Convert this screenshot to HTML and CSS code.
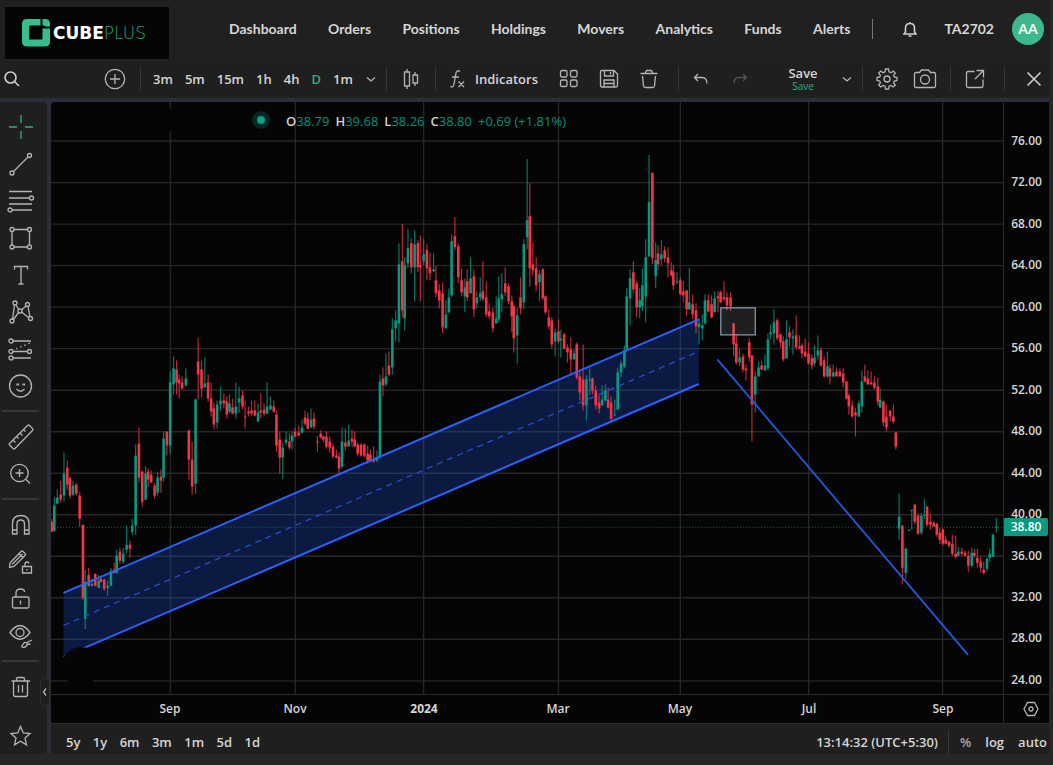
FILE: index.html
```html
<!DOCTYPE html>
<html lang="en">
<head>
<meta charset="utf-8">
<meta name="viewport" content="width=device-width, initial-scale=1">
<title>CubePlus Chart</title>
<link rel="stylesheet" href="styles.css">
</head>
<body>
<header class="topbar">
  <a class="logo" href="#" aria-label="CubePlus">
    <svg class="logo-mark" viewBox="0 0 28 28" aria-hidden="true"><path class="mark" d="M5 0H18.500V6.500H7V20.500H20.500V9.500H28V22.500Q28 27.500 23 27.500H5Q0 27.500 0 22.500V5Q0 0 5 0Z"/><path class="mark" d="M20.500 0H23Q28 0 28 5V7.500H24L20.500 6Z"/></svg>
    <span class="logo-cube">CUBE</span><span class="logo-plus">PLUS</span>
  </a>
  <nav class="nav">
    <a href="#">Dashboard</a><a href="#">Orders</a><a href="#">Positions</a><a href="#">Holdings</a><a href="#">Movers</a><a href="#">Analytics</a><a href="#">Funds</a><a href="#">Alerts</a>
  </nav>
  <div class="account">
    <span class="account-line"></span>
    <button class="icon-btn bell" aria-label="Notifications"><svg width="14" height="17" viewBox="0 0 14 17"><path class="bold" d="M1 13H13L11.500 11V7Q11.500 2.500 7 2.500Q2.500 2.500 2.500 7V11ZM7 2.500V1M5.500 15H8.500"/></svg></button>
    <span class="user">TA2702</span>
    <button class="avatar">AA</button>
  </div>
</header>

<div class="toolbar">
  <button class="icon-btn search" aria-label="Search"><svg width="18" height="18" viewBox="0 0 18 18"><circle class="bold" cx="7.500" cy="7.500" r="5.500"/><path class="bold" d="M11.500 11.500L16 16"/></svg></button>
  <button class="icon-btn add" aria-label="Compare symbol"><svg width="22" height="22" viewBox="0 0 22 22"><circle cx="11" cy="11" r="9.700"/><path d="M11 6V16M6 11H16"/></svg></button>
  <span class="sep"></span>
  <div class="intervals">
    <button>3m</button><button>5m</button><button>15m</button><button>1h</button><button>4h</button><button class="active">D</button><button>1m</button>
  </div>
  <button class="icon-btn chev" aria-label="More intervals"><svg width="12" height="12" viewBox="0 0 12 12"><path d="M2 4.500L6 8L10 4.500"/></svg></button>
  <span class="sep"></span>
  <button class="icon-btn tool-24" aria-label="Chart type"><svg width="18" height="22" viewBox="0 0 18 22"><path d="M5 1V4M5 18V21M2.500 4H7.500V18H2.500ZM13 4V7M13 15V18M11 7H15.500V15H11Z"/></svg></button>
  <span class="sep"></span>
  <button class="indicators"><svg width="18" height="20" viewBox="0 0 18 20"><path d="M11 2.500Q8 .500 7 4L5 15Q4.300 19 1 17.500M3 8H10M9.500 12.500L15 18M15 12.500L9.500 18"/></svg>Indicators</button>
  <div class="layout-tools">
    <button class="icon-btn" aria-label="Templates"><svg width="20" height="20" viewBox="0 0 20 20"><rect x="1.500" y="1.500" width="6.500" height="6.500" rx="1.500"/><rect x="11.500" y="1.500" width="6.500" height="6.500" rx="1.500"/><rect x="1.500" y="11" width="6.500" height="6.500" rx="1.500"/><rect x="11.500" y="11" width="6.500" height="6.500" rx="1.500"/></svg></button>
    <button class="icon-btn" aria-label="Save layout"><svg width="20" height="20" viewBox="0 0 20 20"><path d="M2.500 1.500H15L18.500 5V16.500Q18.500 18 17 18H3Q1.500 18 1.500 16.500V3Q1.500 1.500 2.500 1.500ZM5.500 1.500V7H14.500V1.500M5 18V11H15V18M11.500 3V5.500M5 14.500H15"/></svg></button>
    <button class="icon-btn" aria-label="Delete"><svg width="20" height="20" viewBox="0 0 20 20"><path d="M1.500 4.500H18.500M6 4.500L7.500 1.500H12.500L14 4.500M3.500 7L4.500 17Q4.700 18.500 6.500 18.500H13.500Q15.300 18.500 15.500 17L16.500 7"/></svg></button>
  </div>
  <span class="sep"></span>
  <div class="history">
    <button class="icon-btn" aria-label="Undo"><svg width="16" height="16" viewBox="0 0 16 16"><path d="M5 3L1.500 6.500L5 10M1.500 6.500H9Q14 6.500 14 12.500"/></svg></button>
    <button class="icon-btn faded" aria-label="Redo"><svg width="16" height="16" viewBox="0 0 16 16"><path d="M11 3L14.500 6.500L11 10M14.500 6.500H7Q2 6.500 2 12.500"/></svg></button>
  </div>
  <button class="save">Save<small>Save</small></button>
  <button class="icon-btn chev" aria-label="Saved layouts"><svg width="12" height="12" viewBox="0 0 12 12"><path d="M2 4.500L6 8L10 4.500"/></svg></button>
  <span class="sep"></span>
  <div class="settings">
    <button class="icon-btn" aria-label="Settings"><svg width="22" height="22" viewBox="0 0 22 22"><path d="M9.500 1H12.500L13 3.800L15 4.700L17.300 3L19.300 5L17.600 7.300L18.300 9L21 9.500V12.500L18.300 13L17.600 14.800L19.300 17L17.300 19L15 17.400L13 18.200L12.500 21H9.500L9 18.200L7 17.400L4.700 19L2.700 17L4.400 14.800L3.700 13L1 12.500V9.500L3.700 9L4.400 7.300L2.700 5L4.700 3L7 4.700L9 3.800Z"/><circle cx="11" cy="11" r="3"/></svg></button>
    <button class="icon-btn" aria-label="Screenshot"><svg width="24" height="22" viewBox="0 0 24 22"><path d="M3 4.500H6.500L8.500 2H15.500L17.500 4.500H21Q22.500 4.500 22.500 6V18Q22.500 19.500 21 19.500H3Q1.500 19.500 1.500 18V6Q1.500 4.500 3 4.500Z"/><circle cx="12" cy="11.500" r="4.500"/></svg></button>
  </div>
  <span class="sep"></span>
  <button class="icon-btn tool-24" aria-label="Open in new window"><svg width="20" height="20" viewBox="0 0 20 20"><path d="M9.500 2.500H3Q1.500 2.500 1.500 4V17Q1.500 18.500 3 18.500H16.500Q18 18.500 18 17V10.500M11.500 1.500H18.500V8.500M18.500 1.500L10 10"/></svg></button>
  <span class="sep last"></span>
  <button class="icon-btn close" aria-label="Close"><svg width="16" height="16" viewBox="0 0 16 16"><path class="bold" d="M1.500 1.500L14.500 14.500M14.500 1.500L1.500 14.500"/></svg></button>
</div>

<main class="workspace">
  <aside class="drawing">
    <button class="tool green" aria-label="Cross"><svg viewBox="0 0 28 28"><path d="M14 2V10M14 18V26M2 14H10M18 14H26"/></svg></button>
    <button class="tool" aria-label="Trend line"><svg viewBox="0 0 28 28"><path d="M6.500 21.500L21 7"/><circle cx="5" cy="23" r="2"/><circle cx="22.500" cy="5.500" r="2"/></svg></button>
    <button class="tool" aria-label="Fibonacci"><svg viewBox="0 0 28 28"><path d="M2 4.500H25M2 11H22.500M2 17H25M5 23H25"/><circle cx="24.500" cy="11" r="2"/><circle cx="3" cy="23" r="2"/></svg></button>
    <button class="tool" aria-label="Shapes"><svg viewBox="0 0 28 28"><path d="M7 5.500H20.500M7 23H20.500M5 7.500V21M22.500 7.500V21"/><circle cx="5" cy="5.500" r="2"/><circle cx="22.500" cy="5.500" r="2"/><circle cx="5" cy="23" r="2"/><circle cx="22.500" cy="23" r="2"/></svg></button>
    <button class="tool" aria-label="Text"><svg viewBox="0 0 28 28"><path d="M7.500 8.500V5.500H20.500V8.500M14 5.500V23M11.500 23H16.500"/></svg></button>
    <button class="tool" aria-label="Patterns"><svg viewBox="0 0 28 28"><path d="M5.500 21.500L7.500 7M6.500 21.500L11.500 14.500M9 7L12 12M14.500 12L19 8M21 8.500L23 19M14.500 14L21.500 19.500"/><circle cx="8" cy="5" r="2"/><circle cx="20.500" cy="6.500" r="2"/><circle cx="13" cy="13" r="2"/><circle cx="5" cy="23" r="2"/><circle cx="23.500" cy="20.500" r="2"/></svg></button>
    <button class="tool" aria-label="Forecast"><svg viewBox="0 0 28 28"><path d="M6 6H24M6 16.500H20.500M6 23H24"/><path stroke-dasharray="1.500 3" d="M9 14L23 8"/><circle cx="4" cy="6" r="2"/><circle cx="4" cy="16.500" r="2"/><circle cx="22.500" cy="16.500" r="2"/><circle cx="4" cy="23" r="2"/></svg></button>
    <button class="tool" aria-label="Emoji"><svg viewBox="0 0 28 28"><circle cx="13.500" cy="14" r="11"/><path d="M9.500 17Q13.500 21.500 17.500 17M10 11.500V13.500M11.500 11.500V13.500M16 11.500V13.500M17.500 11.500V13.500"/></svg></button>
    <hr>
    <button class="tool" aria-label="Measure"><svg viewBox="0 0 28 28"><path d="M2.500 20.500L20.500 2.500Q21.500 1.500 22.500 2.500L25.500 5.500Q26.500 6.500 25.500 7.500L8 25.500Q7 26.500 6 25.500L2.500 22Q1.800 21.300 2.500 20.500ZM6 17L8.500 19.500M9.500 13.500L11.500 15.500M13 10L15.500 12.500M16.500 6.500L18.500 8.500"/></svg></button>
    <button class="tool" aria-label="Zoom in"><svg viewBox="0 0 28 28"><circle cx="12.500" cy="13" r="8.700"/><path d="M19 19.500L23 23.500M12.500 9V17M8.500 13H16.500"/></svg></button>
    <hr>
    <button class="tool" aria-label="Magnet"><svg viewBox="0 0 28 28"><path d="M5.500 23V12.500Q5.500 4.500 13.800 4.500Q22 4.500 22 12.500V23H17.500V13Q17.500 9 13.800 9Q10 9 10 13V23ZM5.500 19H10M17.500 19H22"/></svg></button>
    <button class="tool" aria-label="Stay in drawing mode"><svg viewBox="0 0 28 28"><path d="M3 15L14 3.500Q15 2.500 16 3.500L18 5.500Q19 6.500 18 7.500L7 18.500L2.500 19.500ZM5 16.500L15.500 6M12 5.500L16 9.500M16 18.500H24.500V25H15.500V18.500ZM18 18.500V16Q18 14 20 14Q22 14 22 15.500M20 21V22.500"/></svg></button>
    <button class="tool" aria-label="Lock drawings"><svg viewBox="0 0 28 28"><rect x="5.500" y="12" width="16.500" height="11" rx="1.500"/><path d="M9 12V8Q9 4 13.500 4Q17.500 4 17.500 7M13.500 15.500V19.500"/></svg></button>
    <button class="tool" aria-label="Hide drawings"><svg viewBox="0 0 28 28"><path d="M3 10.500Q13 -3.500 23 10.500Q13 24 3 10.500Z"/><circle cx="13" cy="10.500" r="4"/><path d="M14.500 25Q17 19.500 19 20.500T19.500 24Q17.500 26 14.500 25M20 20.500L25 18M20.500 22.500L23.500 22"/></svg></button>
    <hr>
    <button class="tool" aria-label="Remove objects"><svg viewBox="0 0 28 28"><path d="M4.500 8H23M9.500 8V6Q9.500 4.500 11 4.500H16Q17.500 4.500 17.500 6V8M6.500 8V21.500Q6.500 23.500 8.500 23.500H18.500Q20.500 23.500 20.500 21.500V8M11.500 12V19.500M15.500 12V19.500"/></svg></button>
    <button class="tool star" aria-label="Favorites"><svg viewBox="0 0 28 28"><path d="M13.500 4.500L16.300 11L23 11.500L18 16L19.500 22.800L13.500 19.200L7.500 22.800L9 16L4 11.500L10.700 11Z"/></svg></button>
    <button class="collapse" aria-label="Hide drawings toolbar"><svg width="6" height="10" viewBox="0 0 6 10"><path d="M4 1.500L1.500 5L4 8.500"/></svg></button>
  </aside>

  <section class="chart">
    <div class="plot">
      <svg class="canvas" viewBox="51 102 953 591" preserveAspectRatio="none" role="img" aria-label="Daily candlestick chart">
        <g id="grid"></g>
        <path class="ink" d="M160 109H250V131H160Z"/>
        <path class="last-price" d="M51 526.500H1004"/>
        <path class="channel" d="M63.500 592L699.500 319V383.500L63.500 656Z"/>
        <g id="candles"></g>
        <path class="trend" d="M63.500 592L699.500 319M63.500 656L699.500 383.500"/>
        <path class="median" d="M63.500 624.500L699.500 351"/>
        <path class="ray" d="M718 359L969 654"/>
        <rect class="zone" x="721.500" y="307.500" width="34.500" height="27"/>
        <path class="ink" d="M62 658Q70 646 81 646Q94 646 99 657V670H93V684H68V670H62Z"/>
      </svg>
      <div class="legend">
        <span class="dot"></span>
        <span><b>O</b>38.79</span><span><b>H</b>39.68</span><span><b>L</b>38.26</span><span><b>C</b>38.80</span><span>+0.69 (+1.81%)</span>
      </div>
    </div>
    <div class="prices">
      <span>76.00</span><span>72.00</span><span>68.00</span><span>64.00</span><span>60.00</span><span>56.00</span><span>52.00</span><span>48.00</span><span>44.00</span><span>40.00</span><span>36.00</span><span>32.00</span><span>28.00</span><span>24.00</span>
      <strong class="price-tag">38.80</strong>
    </div>
    <div class="months">
      <span>Sep</span><span>Nov</span><span class="year">2024</span><span>Mar</span><span>May</span><span>Jul</span><span>Sep</span>
    </div>
    <button class="icon-btn axis-settings" aria-label="Axis settings"><svg width="16" height="16" viewBox="0 0 16 16"><path d="M4.500 1.500H11.500L15 8L11.500 14.500H4.500L1 8Z"/><circle cx="8" cy="8" r="2"/></svg></button>
    <footer class="ranges">
      <div class="range-list"><button>5y</button><button>1y</button><button>6m</button><button>3m</button><button>1m</button><button>5d</button><button>1d</button></div>
      <button class="clock">13:14:32 (UTC+5:30)</button>
      <span class="sep short"></span>
      <div class="scales"><button class="percent">%</button><button>log</button><button>auto</button></div>
    </footer>
  </section>
</main>
<script src="chart.js"></script>
</body>
</html>
```

FILE: styles.css
```css
* { box-sizing: border-box; }

body {
  margin: 0;
  min-height: 100vh;
  display: flex;
  flex-direction: column;
  padding: 0 4px 12px 0;
  background: #272727;
  color: #d6d6d6;
  font-family: "Open Sans", "Noto Sans", sans-serif;
  font-size: 13px;
  line-height: 20px;
}

button {
  padding: 0;
  border: 0;
  background: none;
  color: inherit;
  font: inherit;
  cursor: pointer;
}

a { color: inherit; text-decoration: none; }

svg {
  display: block;
  flex: none;
  fill: none;
  stroke: #b4b4b4;
  stroke-width: 1.3;
}

.bold { stroke: #cfcfcf; stroke-width: 1.6; }
.icon-btn { display: flex; align-items: center; justify-content: center; flex: none; }

/* Header */
.topbar {
  display: flex;
  align-items: center;
  height: 60px;
  padding-right: 5px;
  background: #202020;
  font-family: Lato, "Noto Sans", sans-serif;
  font-size: 14px;
  font-weight: 700;
}

.logo {
  display: flex;
  align-items: center;
  width: 164px;
  height: 52px;
  margin: 6px 0 0 5px;
  padding-left: 17px;
  background: #050505;
  font-family: "DejaVu Sans", sans-serif;
  font-size: 17px;
  line-height: 20px;
}

.logo-mark { width: 28px; height: 28px; margin-right: 3px; stroke: none; }
.mark { fill: #36bd91; }
.logo-cube { color: #fff; font-weight: 700; }
.logo-plus { color: #2aa57c; font-weight: 200; }

.nav {
  flex: 1;
  display: flex;
  justify-content: space-between;
  margin-left: 60px;
  padding-bottom: 2px;
}

.account { display: flex; align-items: center; padding-bottom: 2px; }
.account-line { width: 1px; height: 20px; margin: 0 30px 0 22px; background: #777; }
.user { margin: 0 18px 0 27px; }

.avatar {
  width: 32px;
  height: 32px;
  border-radius: 50%;
  background: #3cb98c;
  color: #fff;
}

/* Chart toolbar */
.toolbar {
  display: flex;
  align-items: center;
  height: 38px;
  padding-bottom: 1px;
  background: #1f1f1f;
  font-weight: 600;
}

.sep { width: 1px; height: 24px; flex: none; background: #34353d; }
.search { width: 24px; }
.add { width: 24px; margin: 0 13px 0 79px; }

.intervals {
  display: flex;
  justify-content: space-between;
  width: 200px;
  margin: 0 12px;
}

.active { color: #2fae83; }
.chev { width: 12px; margin-right: 9px; }
.tool-24 { width: 24px; margin: 0 12px; }
.indicators { display: flex; align-items: center; gap: 8px; width: 92px; margin-left: 13px; }
.layout-tools { display: flex; gap: 20px; margin: 0 19px 0 18px; }
.history { display: flex; gap: 23px; margin: 0 14px; }

.save {
  display: flex;
  flex-direction: column;
  align-items: center;
  width: 32px;
  margin: 0 22px 0 auto;
  line-height: 14px;
}

.save small { color: #2fae83; font-size: 10px; line-height: 12px; font-weight: 400; }
.faded { opacity: .35; }
.settings { display: flex; gap: 15px; margin: 0 13px; }
.last { margin-left: 5px; }
.close { width: 16px; margin: 0 7px 0 21px; }

/* Workspace */
.workspace {
  flex: 1;
  display: flex;
  gap: 4px;
  border-top: 4px solid #2a2e39;
  background: #2a2e39;
}

.drawing {
  position: relative;
  display: flex;
  flex-direction: column;
  width: 47px;
  flex: none;
  padding: 6px 0 0;
  background: #1f1f1f;
  border-radius: 0 4px 0 0;
}

.tool { height: 37px; padding-left: 7px; }
.tool svg { width: 28px; height: 28px; }
.green svg { stroke: #2fae83; }
.drawing hr { width: 37px; height: 2px; margin: 6px 0 6px 2px; border: 0; background: #34353d; }
.star { margin-top: 12px; }

.collapse {
  position: absolute;
  right: -3px;
  bottom: 48px;
  width: 10px;
  height: 28px;
  display: flex;
  align-items: center;
  justify-content: center;
  background: #1f1f1f;
  border: 1px solid #2a2e39;
  border-radius: 4px;
}

.chart {
  flex: 1;
  min-width: 0;
  display: grid;
  grid-template-columns: 1fr 46px;
  grid-template-rows: 1fr 29px 31px;
  background: #050505;
  border-radius: 4px 0 0 0;
}

.plot { position: relative; min-height: 300px; }

.canvas { position: absolute; inset: 0; width: 100%; height: 100%; }
.grid-line { stroke: #262626; stroke-width: 1.4; }
.ink { fill: #050505; stroke: none; }
.last-price { stroke: #0b6b5c; stroke-width: 1; stroke-dasharray: 1 2; }
.channel { fill: rgba(33, 86, 228, .27); stroke: none; }
.trend { stroke: #2962ff; stroke-width: 2; }
.median { stroke: #2350c8; stroke-width: 1.3; stroke-dasharray: 6 5; }
.ray { stroke: #2458e0; stroke-width: 1.8; }
.zone { fill: rgba(125, 135, 140, .2); stroke: #8ba0b8; stroke-width: 1.2; }
.wick { stroke-width: 1.2; opacity: .75; }
.body { stroke-width: 2.6; }
.up { stroke: #089981; }
.down { stroke: #f23645; }

.legend {
  position: absolute;
  top: 9px;
  left: 201px;
  display: flex;
  gap: 6px;
  color: #0c8f7a;
  white-space: nowrap;
}

.legend b { color: #d0d0d0; font-weight: 600; }

.dot {
  width: 18px;
  height: 18px;
  margin-right: 10px;
  border: 5px solid #06281f;
  border-radius: 50%;
  background: #0aa389;
}

.prices {
  position: relative;
  display: flex;
  flex-direction: column;
  justify-content: space-between;
  align-items: center;
  padding: 29px 0 4px;
  border-left: 1px solid #2b2b2b;
  font-size: 12px;
  font-weight: 600;
}

.price-tag {
  position: absolute;
  top: 70%;
  left: 0;
  width: 44px;
  height: 18px;
  margin-top: 2px;
  background: #089981;
  border-radius: 0 2px 2px 0;
  color: #fff;
  font-weight: 600;
  line-height: 18px;
  text-align: center;
}

.months {
  display: grid;
  grid-template-columns: 119fr 125fr 129fr 134fr 122fr 129fr 134fr 60fr;
  align-items: center;
  padding-bottom: 1px;
  border-top: 1px solid #2b2b2b;
  font-size: 12px;
  font-weight: 600;
}

.months span { display: flex; justify-content: center; width: 0; }
.months span:first-child { grid-column: 2; }
.months .year { font-weight: 700; }

.axis-settings { padding-left: 8px; border: solid #2b2b2b; border-width: 1px 0 0 1px; }

.ranges {
  grid-column: 1 / 3;
  display: flex;
  align-items: center;
  padding: 6px 2px 0 15px;
  border-top: 1px solid #2a2e39;
  background: #1f1f1f;
  font-weight: 600;
}

.range-list { display: flex; justify-content: space-between; width: 194px; }
.clock { margin-left: auto; }
.short { margin: 0 11px 0 10px; }
.scales { display: flex; justify-content: space-between; width: 87px; }
.percent { color: #a8a8a8; }
```

FILE: chart.js
```js
// Each candle: direction, x, high, body top, body bottom, low
const series = `
d51.7 518 521 531 531;u54.3 496 505 530 531;u57.3 489 497 503 503;d60.7 480 494 499 502;u64 452 473 495 501;d67.3 460 467 484 489;d70 477 477 495 498;u73 480 485 494 495;d76.3 482 484 493 495;d79.7 491 495 518 526;
d83 524 524 597 599;u85.3 569 581 618 628;d88.7 567 574 585 586;u92 578 583 585 586;d95.3 573 573 585 585;u98.7 574 580 587 587;d101 577 578 581 582;d104.3 578 579 588 590;u107.7 580 585 587 595;u111 567 570 585 585;
d114.3 562 569 572 573;u116.7 549 555 572 573;d120 547 551 560 563;u123.3 547 553 561 563;u126.7 525 544 549 553;d130 540 544 548 557;u132.3 518 525 531 534;u135.7 444 455 525 534;d139 427 443 477 482;d142.3 470 471 501 506;
u145.7 466 473 499 499;d148.3 468 471 479 486;d151.3 470 474 482 482;d154.7 482 485 495 498;u157.7 471 477 492 495;d161 469 476 480 492;u163.7 431 438 477 481;d167 431 431 445 455;u170.3 371 382 445 453;u173.7 356 368 384 394;
d176.7 360 369 382 394;d179.3 374 379 383 398;d182.3 376 382 388 389;u186 368 378 385 386;d189 429 430 459 479;d192.3 441 459 486 494;u195.7 398 399 483 493;d198.3 337 361 374 399;d201.7 360 369 388 397;u205 357 383 387 387;
d208.3 374 382 398 401;d211.3 382 398 411 416;d214 402 408 424 429;u217.3 400 404 422 428;u220.7 386 400 404 410;d224 393 400 403 408;d227 396 401 414 418;u229.7 394 403 411 413;d232.7 398 407 413 414;u236 382 406 413 418;
u239.3 386 398 402 412;d242.7 390 395 406 409;d245.3 400 416 417 428;d248.7 406 411 413 416;d251.7 400 410 413 415;d255 400 410 415 416;u258.3 403 412 421 421;d261 393 410 412 418;d264.3 403 409 413 416;u267.3 382 406 413 414;
u270.7 396 405 409 409;d274 400 406 411 412;d276.7 410 414 445 451;d280 431 439 457 473;u283 442 447 457 478;u286.3 431 439 442 445;d289.7 433 441 447 449;u292.3 431 435 441 449;d295.3 427 431 436 437;d299 425 432 435 435;
u302.3 419 427 432 433;d305.3 410 417 423 425;d308 412 418 428 429;u311.3 408 419 427 427;d314.3 412 418 426 429;d317.7 435 441 442 451;d321 430 433 437 438;d323.7 435 436 439 442;d326.7 431 436 446 448;d330 436 441 447 452;
d333.3 443 446 456 458;d336.7 449 455 457 458;d339.3 452 456 468 473;u342.3 427 441 466 468;d345.7 428 442 446 450;u349 424 440 446 446;d352.3 429 438 441 446;d355 431 439 446 446;d358 442 444 453 456;d361.3 443 444 455 456;
d364.7 443 444 455 457;d368 445 453 460 463;d370.7 449 454 461 461;d374 446 459 461 462;u377.3 450 457 460 462;u380.3 374 381 457 458;d383.3 367 378 385 396;u386.3 353 376 384 386;d389.3 351 365 374 376;u392.7 318 329 367 374;
u396 310 320 328 341;u399.3 243 264 323 342;d402.7 224 261 310 317;u405 257 265 318 330;u408.3 229 248 263 268;d411.7 238 243 267 273;u415 230 244 267 301;d418.3 240 243 267 272;d420.7 235 265 267 301;u424 239 254 261 265;
d427.3 244 250 268 280;d430.3 252 267 273 280;u434 253 269 271 272;d436.3 266 280 293 297;d439.7 284 290 300 308;d443 282 293 327 333;u446.3 300 314 328 328;u449.3 288 297 312 313;u452 234 241 295 297;d455.3 217 236 247 250;
d458.7 243 246 277 283;d462 268 280 292 296;u465.3 278 287 296 312;d467.7 269 281 297 301;u471 257 278 293 293;d474.3 269 276 309 317;u477.3 291 297 303 308;u480.7 277 293 297 301;d483.3 261 291 299 301;d486.7 281 297 314 317;
d489.7 303 311 316 319;d493.3 308 312 328 332;u496.7 296 318 323 323;u499.3 276 298 319 322;u502.3 273 294 299 312;d505.7 267 283 292 296;d509 283 286 301 304;d512.3 295 301 316 332;d514.3 304 306 338 352;u517.7 308 315 335 363;
d521 277 297 308 314;u524.3 239 244 302 309;u527.7 159 220 237 249;d530.3 183 216 268 286;d533.3 242 264 270 275;d536.7 257 268 285 291;u540 270 274 282 301;d543.3 268 269 298 300;d546 295 296 312 314;d549.3 309 317 326 329;
d552.3 317 320 344 348;u555.7 328 332 341 356;d559 319 331 341 343;u561.3 329 338 340 357;d564.7 332 334 348 349;d568 344 347 352 362;d571.3 337 349 359 375;u574.7 349 353 359 359;d577.3 342 344 377 379;d580.3 370 376 392 400;
d583.7 344 379 405 410;u587 375 379 405 420;u590.3 368 379 380 394;d593 377 378 390 394;d596.3 385 390 405 409;d599.7 395 402 408 413;u602.7 385 399 405 405;u606 384 390 400 401;d608.7 387 399 407 408;d611.7 396 402 418 420;
u615.3 399 414 415 415;u618.3 367 372 409 409;u621.7 360 363 372 377;u625 345 350 366 368;u627.3 288 296 349 351;u630.7 269 278 298 325;d634 261 272 289 293;d637.3 281 283 307 317;u640.3 288 300 307 318;u643 268 285 306 311;
u646.3 239 257 296 322;u649.7 155 202 256 257;d653 172 173 258 264;u656.3 242 260 276 288;d658.7 245 253 264 270;u662 240 254 259 265;d665.3 246 250 258 262;d668.7 247 257 263 277;d672 262 270 275 276;d674 265 272 285 290;
u677.7 272 281 282 284;d681 277 280 294 295;d684 281 291 295 302;d687.3 290 290 309 316;u690 268 302 309 310;d693.3 294 304 314 319;d696.7 303 310 326 333;u699.7 318 323 327 344;u703 314 325 328 340;u705.7 294 300 323 324;
d709 294 300 311 312;d712.3 295 304 317 318;u715.3 291 298 312 312;d718.7 291 296 298 312;d721.3 290 292 302 303;d724.7 281 297 299 301;d727.7 292 297 305 310;d731.3 292 297 306 311;d734.3 323 323 344 356;d737 334 343 362 364;
u740.3 348 357 362 366;d743.7 353 356 369 372;d746.7 364 368 370 380;d750 338 342 357 361;d752.7 355 355 404 441;u756 371 376 394 412;u759.3 361 367 376 376;d762.3 360 365 369 370;u765.7 354 365 370 370;u768.7 333 339 368 370;
u771.3 324 332 334 339;u774.7 309 322 333 344;d778 318 320 338 340;d781.3 333 334 342 347;d784 336 341 359 361;u787.3 320 339 358 358;d790.3 326 332 337 346;u793.7 329 336 338 354;d797 315 335 347 349;d800.3 335 346 348 349;
d802.7 343 345 353 358;d806 338 351 356 357;d809.3 342 353 363 364;d812.7 354 358 365 369;u815.3 345 357 363 366;u818.7 335 350 355 360;d821.7 347 350 365 366;d825 356 360 376 377;u828.3 351 366 376 377;d830.7 364 368 376 384;
u834 364 372 376 377;d837.3 367 371 376 376;d840.7 368 371 376 376;d844 368 373 382 387;d847.3 380 381 398 399;d849.7 393 395 406 414;d853 400 405 416 417;d856.3 408 412 415 436;u859.7 400 403 416 416;u862.7 370 381 406 412;
d865.7 364 376 381 382;d868.7 370 378 384 384;d872 371 382 384 384;d875.3 376 382 387 389;d878.7 377 386 401 405;u881 388 399 407 408;d884.3 400 401 422 426;d887.3 404 416 427 431;d891 410 410 416 421;d894.3 404 416 421 423;
d896.7 431 432 446 449;u900 493 516 528 539;d903.3 524 525 567 583;u906.7 547 548 572 578;u910 529 529 530 530;u912.7 509 509 510 529;d915.7 503 504 521 524;d919 513 515 533 534;u922.3 512 515 532 534;u925.3 498 514 515 518;
d928 505 506 524 526;d931.3 513 521 524 529;d934.7 520 522 526 526;d937.7 522 523 534 536;d940.7 527 532 539 543;d943.7 527 529 543 545;d946.7 535 539 543 543;d950 540 541 545 547;d953.3 534 543 553 555;d956.7 535 553 556 558;
u959.3 546 551 555 555;d962.7 547 551 553 555;d966 550 552 555 555;d969.3 550 555 565 571;u972.7 547 552 565 566;d975.3 548 552 555 557;d978.3 548 557 562 567;d981.7 556 561 567 572;d984.7 561 569 572 574;u988 557 558 568 571;
u990.7 548 553 557 561;u994 533 534 556 556;u997.3 517 526 527 532`;

const SVG_NS = "http://www.w3.org/2000/svg";

function addPath(parent, className, d) {
  const path = document.createElementNS(SVG_NS, "path");
  path.setAttribute("class", className);
  path.setAttribute("d", d);
  parent.appendChild(path);
}

const grid = document.getElementById("grid");
let lines = "";
for (const x of [170.5, 295.5, 424, 559, 681, 809.5, 943.5]) lines += `M${x} 102V693`;
for (let i = 0; i < 14; i++) lines += `M51 ${141 + i * 41.45}H1004`;
addPath(grid, "grid-line", lines);

const candles = document.getElementById("candles");
for (const entry of series.trim().split(";")) {
  const text = entry.trim();
  const side = text[0] === "u" ? "up" : "down";
  const [x, high, top, bottom, low] = text.slice(1).split(" ").map(Number);
  addPath(candles, `wick ${side}`, `M${x} ${high}V${low}`);
  addPath(candles, `body ${side}`, `M${x} ${top}V${bottom}`);
}
```
